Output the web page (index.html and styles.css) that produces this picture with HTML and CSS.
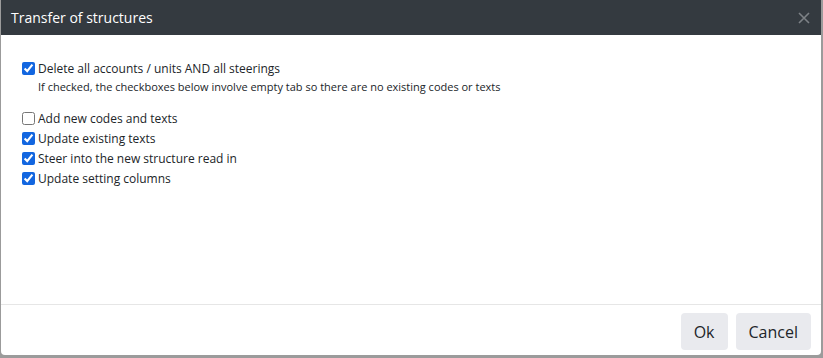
FILE: index.html
```html
<!DOCTYPE html>
<html lang="en">
<head>
    <meta charset="UTF-8">
    <meta name="viewport" content="width=device-width, initial-scale=1.0">
    <title>Transfer of structures</title>
    <link rel="stylesheet" href="styles.css">
</head>
<body>
    <div class="dialog">
        <div class="dialog-header">
            <span class="dialog-title">Transfer of structures</span>
            <button class="close" aria-label="Close">
                <svg width="12" height="12" viewBox="0 0 12 12">
                    <path d="M1 1 L11 11 M11 1 L1 11" stroke="#7d8186" stroke-width="1.6" fill="none"/>
                </svg>
            </button>
        </div>
        <div class="dialog-body">
            <div class="option">
                <input type="checkbox" id="delete-all" checked>
                <label for="delete-all">Delete all accounts / units AND all steerings</label>
            </div>
            <p class="hint">If checked, the checkboxes below involve empty tab so there are no existing codes or texts</p>
            <!-- options for the read in -->
            <div class="options">
                <div class="option">
                    <input type="checkbox" id="add-new">
                    <label for="add-new">Add new codes and texts</label>
                </div>
                <div class="option">
                    <input type="checkbox" id="update-texts" checked>
                    <label for="update-texts">Update existing texts</label>
                </div>
                <div class="option">
                    <input type="checkbox" id="steer-into" checked>
                    <label for="steer-into">Steer into the new structure read in</label>
                </div>
                <div class="option">
                    <input type="checkbox" id="update-columns" checked>
                    <label for="update-columns">Update setting columns</label>
                </div>
            </div>
        </div>
        <div class="dialog-footer">
            <button class="btn">Ok</button>
            <button class="btn">Cancel</button>
        </div>
    </div>
</body>
</html>
```

FILE: styles.css
```css
* {
    margin: 0;
    padding: 0;
    box-sizing: border-box;
}
body {
    font-family: "Open Sans", sans-serif;
    background-color: #9b9b9b;
    color: #212529;
    width: 823px;
    height: 358px;
    overflow: hidden;
}
.dialog {
    margin-left: 1px;
    width: 820px;
    height: 355px;
    background-color: #fff;
    border-radius: 0 0 4px 4px;
    display: flex;
    flex-direction: column;
}
.dialog-header {
    height: 35px;
    background-color: #343a40;
    display: flex;
    align-items: center;
    justify-content: space-between;
    padding: 0 11px 0 10px;
}
.dialog-title {
    color: #fff;
    font-size: 14px;
}
.close {
    background: none;
    border: none;
    display: flex;
    margin-top: 1px;
}
.dialog-body {
    flex: 1;
    padding: 23px 20px 0 20px;
    font-size: 12px;
}
.option {
    display: flex;
    align-items: center;
    height: 20px;
}
.option input {
    width: 13px;
    height: 13px;
    margin: 0 3px 0 1px;
    accent-color: #1266e0;
}
.hint {
    font-size: 11px;
    padding-left: 17px;
    line-height: 16px;
    margin-top: 1px;
}
.options {
    margin-top: 13px;
}
.dialog-footer {
    height: 51px;
    border-top: 1px solid #e6e6e6;
    display: flex;
    justify-content: flex-end;
    align-items: flex-start;
    gap: 8px;
    padding: 8px 10px 0 0;
}
.btn {
    font-family: "Open Sans", sans-serif;
    font-size: 16px;
    color: #212529;
    background-color: #e9eaee;
    border: none;
    border-radius: 4px;
    height: 37px;
    padding: 0 13px;
}
```
